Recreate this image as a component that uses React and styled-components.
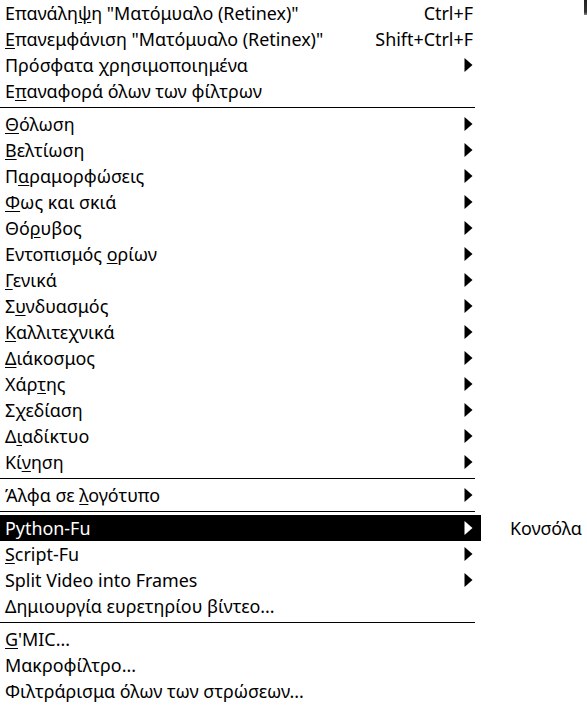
import styled, { createGlobalStyle } from "styled-components";

const GlobalStyle = createGlobalStyle`
    html, body {
        margin: 0;
        padding: 0;
        background: #ffffff;
    }
    body {
        font-family: "Noto Sans", "DejaVu Sans", sans-serif;
        font-size: 17.9px;
        color: #000;
        overflow: hidden;
    }
`;

// label parts: [before, mnemonic, after]
const groups = [
    [
        { text: ["Επανάλη", "ψ", 'η "Ματόμυαλο (Retinex)"'], accel: "Ctrl+F" },
        { text: ["", "Ε", 'πανεμφάνιση "Ματόμυαλο (Retinex)"'], accel: "Shift+Ctrl+F" },
        { text: ["Πρόσφατα χρησιμοποιημένα"], sub: true },
        { text: ["Ε", "π", "αναφορά όλων των φίλτρων"] },
    ],
    [
        { text: ["", "Θ", "όλωση"], sub: true },
        { text: ["", "Β", "ελτίωση"], sub: true },
        { text: ["Π", "α", "ραμορφώσεις"], sub: true },
        { text: ["", "Φ", "ως και σκιά"], sub: true },
        { text: ["Θό", "ρ", "υβος"], sub: true },
        { text: ["Εντοπισμός ", "ο", "ρίων"], sub: true },
        { text: ["", "Γ", "ενικά"], sub: true },
        { text: ["Σ", "υ", "νδυασμός"], sub: true },
        { text: ["", "Κ", "αλλιτεχνικά"], sub: true },
        { text: ["", "Δ", "ιάκοσμος"], sub: true },
        { text: ["Χάρ", "τ", "ης"], sub: true },
        { text: ["Σ", "χ", "εδίαση"], sub: true },
        { text: ["Δ", "ι", "αδίκτυο"], sub: true },
        { text: ["Κί", "ν", "ηση"], sub: true },
    ],
    [
        { text: ["Άλφα σε ", "λ", "ογότυπο"], sub: true },
    ],
    [
        { text: ["Python-Fu"], sub: true, active: true },
        { text: ["", "S", "cript-Fu"], sub: true },
        { text: ["Split Video into Frames"], sub: true },
        { text: ["Δημιουργία ευρετηρίου βίντεο..."] },
    ],
    [
        { text: ["", "G", "'MIC..."] },
        { text: ["Μακροφίλτρο..."] },
        { text: ["Φιλτράρισμα όλων των στρώσεων..."] },
    ],
];

function Label({ parts }) {
    if (parts.length === 1) return <LabelText>{parts[0]}</LabelText>;
    return (
        <LabelText>
            {parts[0]}
            <Mnemonic>{parts[1]}</Mnemonic>
            {parts[2]}
        </LabelText>
    );
}

function Arrow({ light }) {
    return (
        <ArrowSvg width="9" height="14" viewBox="0 0 9 14">
            <path d="M0.5 0 L8.5 7 L0.5 14 Z" fill={light ? "#fff" : "#000"} />
        </ArrowSvg>
    );
}

export default function App() {
    return (
        <Page>
            <GlobalStyle />
            <Menu>
                {groups.map((group, gi) => (
                    <Group key={gi}>
                        {gi > 0 && <Separator />}
                        {group.map((item, ii) => (
                            <Item key={ii} $active={item.active}>
                                <Label parts={item.text} />
                                {item.accel && <Accel>{item.accel}</Accel>}
                                {item.sub && <Arrow light={item.active} />}
                            </Item>
                        ))}
                    </Group>
                ))}
            </Menu>
            <SubMenu>
                <SubItem>Κονσόλα</SubItem>
            </SubMenu>
            <EdgeMark />
        </Page>
    );
}

const Page = styled.div`
    position: relative;
    width: 587px;
    height: 711px;
    overflow: hidden;
    background: #fff;
`;

const Menu = styled.div`
    width: 481px;
    display: flex;
    flex-direction: column;
`;

const Group = styled.div`
    display: flex;
    flex-direction: column;
`;

const Separator = styled.div`
    height: 7px;
    display: flex;
    align-items: center;

    &::before {
        content: "";
        display: block;
        width: 475px;
        height: 1px;
        background: #000;
    }
`;

const Item = styled.div`
    height: 26px;
    display: flex;
    align-items: center;
    padding: 0 8px 0 5px;
    background: ${(p) => (p.$active ? "#000" : "transparent")};
    color: ${(p) => (p.$active ? "#fff" : "#000")};
    white-space: nowrap;
`;

const LabelText = styled.span`
    flex: 1;
`;

const Mnemonic = styled.span`
    text-decoration: underline;
    text-underline-offset: 2px;
`;

const Accel = styled.span`
    margin-right: 0;
`;

const ArrowSvg = styled.svg`
    display: block;
    flex: none;
`;

const SubMenu = styled.div`
    position: absolute;
    left: 500px;
    top: 515px;
    width: 87px;
    background: #fff;
`;

const SubItem = styled.div`
    height: 26px;
    display: flex;
    align-items: center;
    padding-left: 10px;
    white-space: nowrap;
`;

const EdgeMark = styled.div`
    position: absolute;
    right: 0;
    top: 0;
    width: 3px;
    height: 15px;
    background: linear-gradient(#222, #333 80%, #888);
`;
